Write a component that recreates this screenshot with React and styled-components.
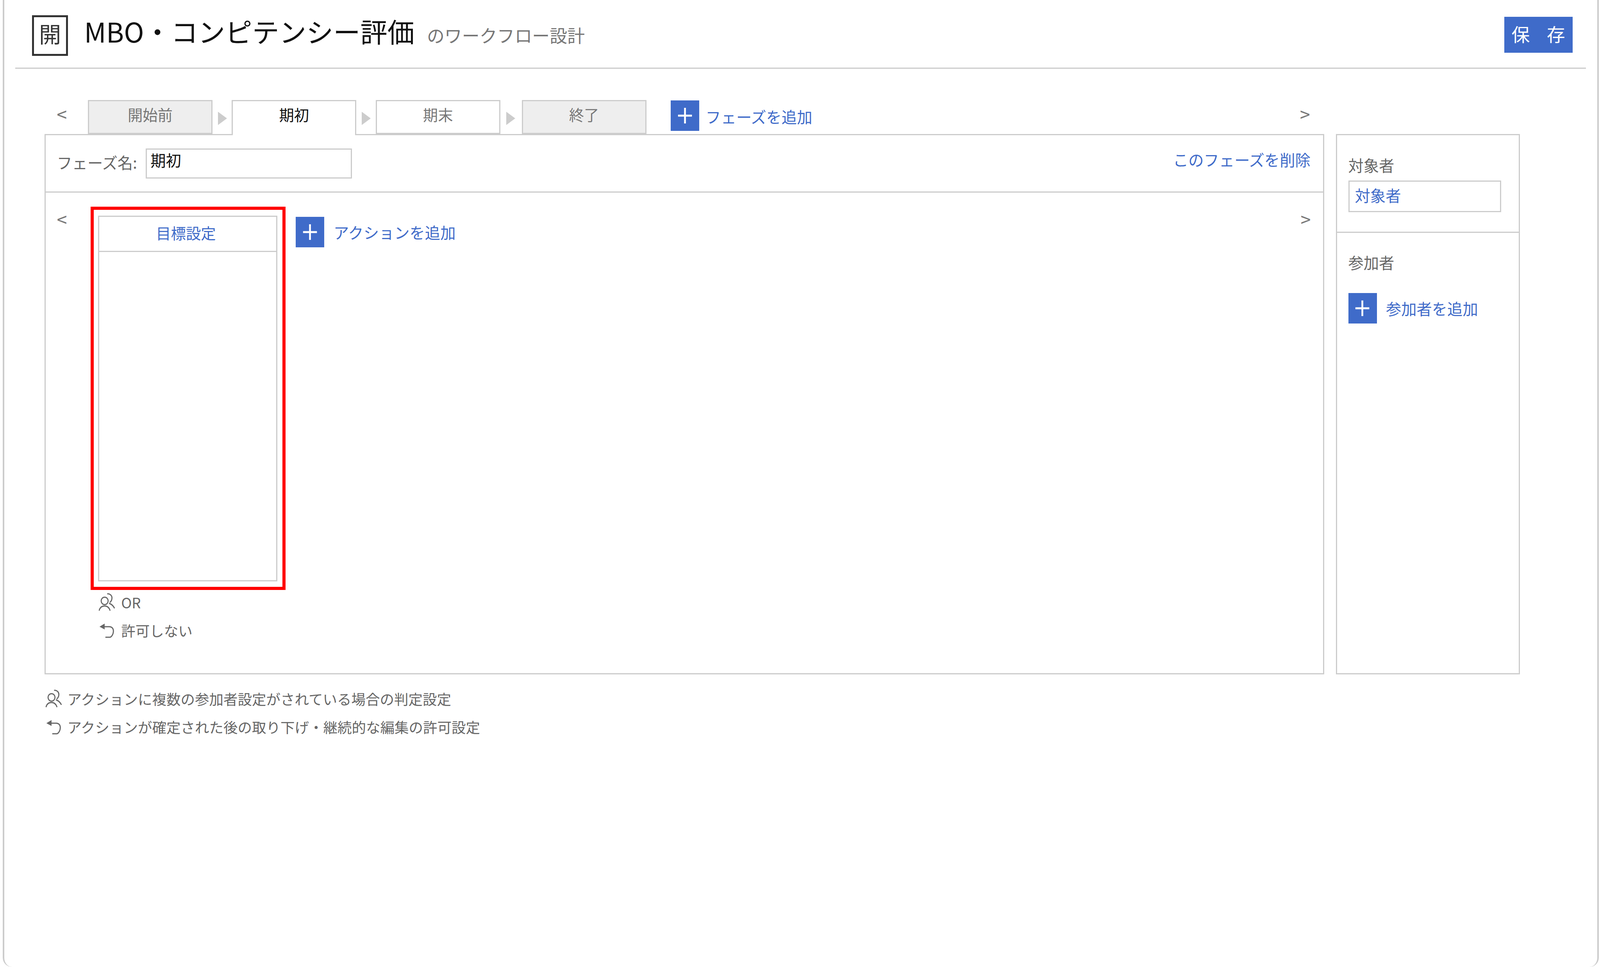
import React from 'react';
import styled, { createGlobalStyle } from 'styled-components';

const BLUE = '#3f6bc9';
const LINE = '#cccccc';
const FONT = '"Noto Sans CJK JP", "Noto Sans", sans-serif';

// horizontal sizes follow the window width, the design is 4376 wide
const u = (n) => `calc(${n} * 100vw / 4376)`;

const GlobalStyle = createGlobalStyle`
  html, body {
    margin: 0;
    padding: 0;
    background: #fff;
    font-family: ${FONT};
    overflow: hidden;
  }
  * { box-sizing: border-box; }
`;

const Page = styled.div`
  width: ${u(4365)};
  height: 2475px;
  margin-left: ${u(8)};
  border: 4px solid ${LINE};
  border-top: 0;
  border-bottom: 0;
  border-bottom-right-radius: 24px;
  border-bottom-left-radius: 24px;
  overflow: hidden;
`;

const Header = styled.header`
  display: flex;
  align-items: flex-start;
  justify-content: space-between;
  height: 176px;
  margin: 0 ${u(31)} 0 ${u(29)};
  padding: 37px ${u(37)} 0 ${u(46)};
  border-bottom: 3px solid ${LINE};
`;

const TitleGroup = styled.div`
  display: flex;
  align-items: baseline;
`;

const TitleIcon = styled.div`
  display: flex;
  align-items: center;
  justify-content: center;
  width: ${u(99)};
  height: 104px;
  margin-right: ${u(44)};
  padding-bottom: 12px;
  border: 5px solid #333;
  font-size: ${u(60)};
  line-height: 1;
  color: #333;
`;

const Title = styled.h1`
  margin: 0 ${u(34)} 0 0;
  font-size: ${u(74)};
  font-weight: 400;
  line-height: 84px;
  color: #111;
`;

const SubTitle = styled.span`
  font-size: ${u(48)};
  color: #777;
`;

const SaveButton = styled.button`
  width: ${u(187)};
  height: 92px;
  margin-top: 6px;
  padding: 0 0 8px;
  border: 0;
  background: ${BLUE};
  color: #fff;
  font-family: ${FONT};
  font-size: ${u(50)};
  word-spacing: ${u(35)};
`;

const Body = styled.main`
  margin: 80px 0 0 ${u(110)};
`;

const TabRow = styled.div`
  display: flex;
  align-items: flex-end;
  width: ${u(3500)};
  height: 87px;
  padding: 0 ${u(40)} 0 ${u(33)};
`;

const Chevron = styled.span`
  flex: none;
  width: ${u(27)};
  color: #777;
  font-size: ${u(50)};
  line-height: 1;
`;

const TabChevron = styled(Chevron)`
  align-self: flex-start;
  margin-top: 12px;
  margin-right: ${(p) => u(p.$gap || 0)};
  margin-left: ${(p) => (p.$end ? 'auto' : 0)};
`;

const Tab = styled.div`
  position: relative;
  flex: none;
  width: ${u(341)};
  height: ${(p) => (p.$active ? 90 : 87)}px;
  margin-bottom: ${(p) => (p.$active ? -3 : 0)}px;
  padding-top: 5px;
  border: 3px solid ${LINE};
  border-bottom: ${(p) => (p.$active ? 0 : `3px solid ${LINE}`)};
  background: ${(p) => (p.$muted ? '#eeeeee' : '#fff')};
  color: ${(p) => (p.$active ? '#111' : '#777')};
  font-size: ${u(41)};
  line-height: 56px;
  text-align: center;
  z-index: 1;
`;

const TabArrow = styled.span`
  flex: none;
  align-self: center;
  width: 0;
  height: 0;
  margin: 7px ${(p) => u(p.$after)} 0 ${(p) => u(p.$before)};
  border-top: 17px solid transparent;
  border-bottom: 17px solid transparent;
  border-left: ${u(25)} solid ${LINE};
`;

const AddLink = styled.div`
  display: flex;
  align-items: center;
  flex: none;
  color: ${BLUE};
  font-size: ${u(42)};
  line-height: 1;
`;

const PhaseAdd = styled(AddLink)`
  align-self: flex-start;
  margin-left: ${u(67)};
  margin-top: 1px;
`;

const PlusBox = styled.span`
  display: flex;
  align-items: center;
  justify-content: center;
  flex: none;
  width: ${u(78)};
  height: 78px;
  margin-right: ${(p) => u(p.$gap)};
  background: ${BLUE};
  svg { display: block; }
`;

const AddText = styled.span`
  position: relative;
  top: 2px;
`;

const Workspace = styled.div`
  display: flex;
  gap: ${u(31)};
  height: 1383px;
`;

const Panel = styled.section`
  flex: none;
  display: flex;
  flex-direction: column;
  width: ${u(3500)};
  border: 3px solid ${LINE};
`;

const PhaseRow = styled.div`
  display: flex;
  align-items: flex-start;
  height: 147px;
  padding: 34px ${u(35)} 0 ${u(30)};
  border-bottom: 3px solid ${LINE};
`;

const FieldLabel = styled.label`
  flex: none;
  width: ${u(243)};
  margin-top: 7px;
  color: #666;
  font-size: ${u(42)};
  line-height: 56px;
`;

const NameInput = styled.div`
  width: ${u(564)};
  height: 77px;
  padding: 0 ${u(10)};
  border: 3px solid ${LINE};
  color: #111;
  font-size: ${u(42)};
  line-height: 52px;
`;

const DeleteLink = styled.a`
  margin-left: auto;
  color: ${BLUE};
  font-size: ${u(42)};
  line-height: 56px;
`;

const FlowRow = styled.div`
  display: flex;
  align-items: flex-start;
  flex: 1;
  padding: 36px ${u(35)} 0 ${u(30)};
`;

const FlowChevron = styled(Chevron)`
  margin-top: ${(p) => p.$top}px;
  margin-left: ${(p) => (p.$end ? 'auto' : 0)};
`;

const ActionColumn = styled.div`
  flex: none;
  width: ${u(534)};
  margin: 0 ${u(27)} 0 ${u(65)};
`;

const Highlight = styled.div`
  height: 981px;
  padding: 15px ${u(14)} 14px ${u(12)};
  border: 8px solid #ff0000;
`;

const ActionCard = styled.div`
  height: 100%;
  border: 3px solid ${LINE};
`;

const ActionTitle = styled.div`
  height: 90px;
  padding: 12px ${u(10)} 0 0;
  border-bottom: 3px solid ${LINE};
  color: ${BLUE};
  font-size: ${u(41)};
  line-height: 56px;
  text-align: center;
`;

const MetaList = styled.div`
  margin-top: -4px;
  padding-left: ${u(22)};
`;

const MetaRow = styled.div`
  display: flex;
  align-items: center;
  gap: ${(p) => u(p.$gap)};
  height: 72px;
  color: #666;
  font-size: ${u(39)};
  line-height: 1;
  svg { flex: none; }
`;

const ActionAdd = styled(AddLink)`
  margin-top: 26px;
`;

const Sidebar = styled.aside`
  flex: none;
  display: flex;
  flex-direction: column;
  width: ${u(504)};
  border: 3px solid ${LINE};
`;

const SideBlock = styled.div`
  height: ${(p) => p.$height || 'auto'};
  padding: ${(p) => p.$top}px ${u(31)} 0;
  border-bottom: ${(p) => (p.$divider ? `3px solid ${LINE}` : 0)};
`;

const SideLabel = styled.div`
  color: #666;
  font-size: ${u(42)};
  line-height: 56px;
`;

const TargetBox = styled.div`
  width: ${u(418)};
  height: 81px;
  margin-top: 12px;
  padding: 6px ${u(15)};
  border: 3px solid ${LINE};
  color: ${BLUE};
  font-size: ${u(42)};
  line-height: 56px;
`;

const SideAdd = styled(AddLink)`
  margin-top: 51px;
`;

const NoteList = styled.div`
  margin: 27px 0 0 ${u(2)};
`;

const Plus = () => (
  <svg style={{ width: u(44) }} height="44" viewBox="0 0 44 44" preserveAspectRatio="none">
    <path d="M22 2v40M3 22h38" stroke="#fff" strokeWidth="5" fill="none" />
  </svg>
);

const PeopleIcon = () => (
  <svg style={{ width: u(46) }} height="48" viewBox="0 0 46 48" preserveAspectRatio="none" fill="none" stroke="#666" strokeWidth="3">
    <circle cx="17" cy="20" r="9.5" />
    <path d="M2 45C4 36 10 33 17 33S29 36 32 45" />
    <path d="M24 2C31 1 37 6 37 12C37 18 34 22 31 24" />
    <path d="M29 26C35 28 41 33 44 39" />
  </svg>
);

const UndoIcon = () => (
  <svg style={{ width: u(46) }} height="44" viewBox="0 0 46 44" preserveAspectRatio="none" fill="none">
    <path d="M3 12 17 4v15z" fill="#666" />
    <path d="M15 12H30C37 12 41 17 41 23C41 32 35 39 31 39H19" stroke="#666" strokeWidth="3" />
  </svg>
);

const App = () => (
  <>
    <GlobalStyle />
    <Page>
      <Header>
        <TitleGroup>
          <TitleIcon>開</TitleIcon>
          <Title>MBO・コンピテンシー評価</Title>
          <SubTitle>のワークフロー設計</SubTitle>
        </TitleGroup>
        <SaveButton>保 存</SaveButton>
      </Header>

      <Body>
        <TabRow>
          <TabChevron $gap={58}>&lt;</TabChevron>
          <Tab $muted>開始前</Tab>
          <TabArrow $before={15} $after={13} />
          <Tab $active>期初</Tab>
          <TabArrow $before={15} $after={13} />
          <Tab>期末</Tab>
          <TabArrow $before={16} $after={18} />
          <Tab $muted>終了</Tab>
          <PhaseAdd>
            <PlusBox $gap={17}><Plus /></PlusBox>
            <AddText>フェーズを追加</AddText>
          </PhaseAdd>
          <TabChevron $end>&gt;</TabChevron>
        </TabRow>

        <Workspace>
          <Panel>
            <PhaseRow>
              <FieldLabel>フェーズ名:</FieldLabel>
              <NameInput>期初</NameInput>
              <DeleteLink>このフェーズを削除</DeleteLink>
            </PhaseRow>
            <FlowRow>
              <FlowChevron $top={8}>&lt;</FlowChevron>
              <ActionColumn>
                <Highlight>
                  <ActionCard>
                    <ActionTitle>目標設定</ActionTitle>
                  </ActionCard>
                </Highlight>
                <MetaList>
                  <MetaRow $gap={16}><PeopleIcon />OR</MetaRow>
                  <MetaRow $gap={16}><UndoIcon />許可しない</MetaRow>
                </MetaList>
              </ActionColumn>
              <ActionAdd>
                <PlusBox $gap={26}><Plus /></PlusBox>
                <span>アクションを追加</span>
              </ActionAdd>
              <FlowChevron $end $top={8}>&gt;</FlowChevron>
            </FlowRow>
          </Panel>

          <Sidebar>
            <SideBlock $top={48} $height="250px" $divider>
              <SideLabel>対象者</SideLabel>
              <TargetBox>対象者</TargetBox>
            </SideBlock>
            <SideBlock $top={47}>
              <SideLabel>参加者</SideLabel>
              <SideAdd>
                <PlusBox $gap={25}><Plus /></PlusBox>
                <span>参加者を追加</span>
              </SideAdd>
            </SideBlock>
          </Sidebar>
        </Workspace>

        <NoteList>
          <MetaRow $gap={14}><PeopleIcon />アクションに複数の参加者設定がされている場合の判定設定</MetaRow>
          <MetaRow $gap={14}><UndoIcon />アクションが確定された後の取り下げ・継続的な編集の許可設定</MetaRow>
        </NoteList>
      </Body>
    </Page>
  </>
);

export default App;
